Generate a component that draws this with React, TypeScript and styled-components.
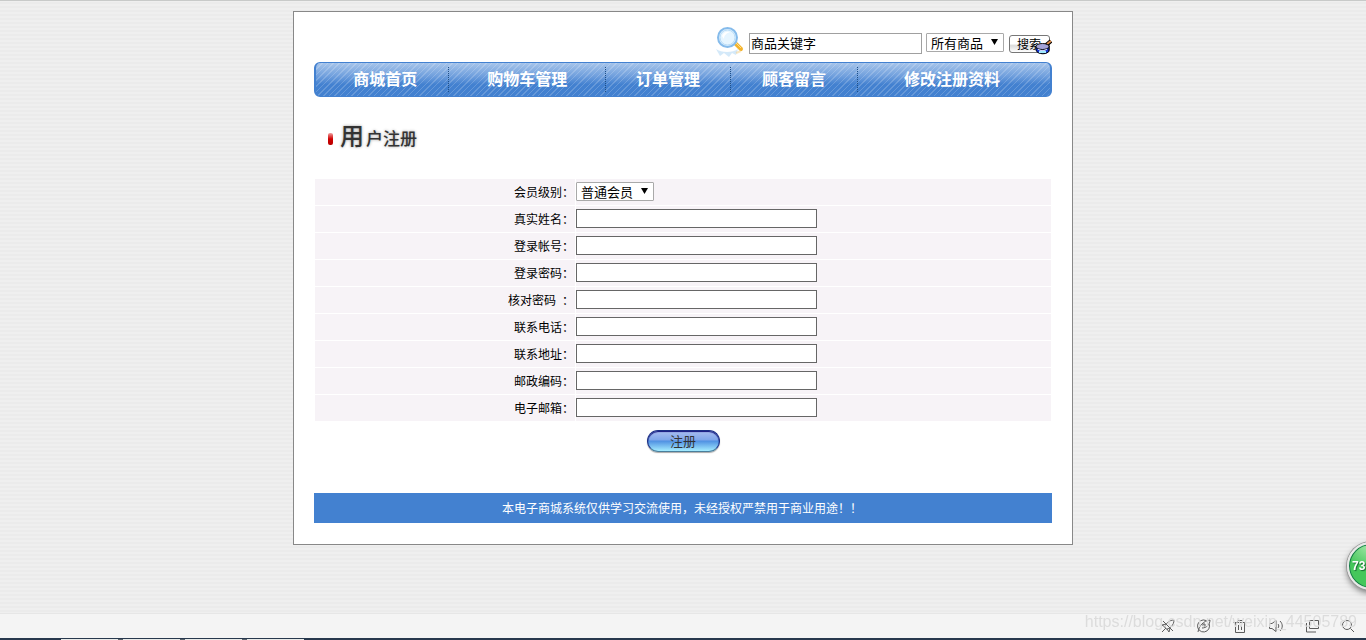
import React from "react";
import styled, { createGlobalStyle } from "styled-components";

const GlobalStyle = createGlobalStyle`
  * { box-sizing: border-box; }
  body {
    margin: 0;
    color: #000;
    font-family: "Noto Sans CJK SC", sans-serif;
    font-size: 12px;
    line-height: 18px;
    background: repeating-linear-gradient(#efefef 0 2px, #ebebeb 2px 4px);
    border-top: 1px solid #c8cac9;
  }
  input, select, button { font: inherit; margin: 0; }
`;

const Card = styled.div`
  max-width: 780px;
  margin: 10px auto 96px;
  padding: 14px 20px 21px;
  background: #fff;
  border: 1px solid #888;
`;

const SearchBar = styled.form`
  display: flex;
  justify-content: flex-end;
  align-items: flex-start;
  height: 36px;
`;

const SearchIcon = styled.svg`
  width: 30px;
  height: 34px;
  margin-right: 4px;
`;

const Keyword = styled.input`
  width: 173px;
  height: 21px;
  margin: 7px 4px 0 0;
  padding: 0 1px 2px;
  border: 1px solid #a0a0a0;
  font-size: 13px;
`;

const SelectBox = styled.span<{ $top?: number }>`
  position: relative;
  display: flex;
  width: 78px;
  margin-top: ${({ $top = 0 }) => $top}px;
  select {
    width: 100%;
    height: 19px;
    padding: 0 4px;
    appearance: none;
    background: #fff;
    border: 1px solid #a9a9a9;
    border-radius: 1px;
    color: #000;
    font-size: 13px;
    line-height: 17px;
  }
  svg {
    position: absolute;
    top: 6px;
    right: 6px;
    width: 7px;
    height: 6px;
    pointer-events: none;
  }
`;

const SearchButton = styled.button`
  position: relative;
  width: 41px;
  height: 18px;
  margin: 9px 2px 0 5px;
  padding: 0 7px;
  border: 1px solid #777;
  border-radius: 3px;
  background: linear-gradient(#fff 0 48%, #dcdcdc 60%, #fff);
  color: #000;
  line-height: 16px;
  text-align: left;
  white-space: nowrap;
  svg {
    position: absolute;
    top: 3px;
    right: -3px;
    width: 17px;
    height: 16px;
  }
`;

const Nav = styled.nav`
  display: grid;
  grid-template-columns: 134fr 157fr 126fr 127fr 193fr;
  height: 35px;
  padding: 4px 0;
  border: solid #4381d0;
  border-width: 1px 2px;
  border-radius: 6px;
  background:
    repeating-linear-gradient(135deg, rgba(255, 255, 255, 0.18) 0 1px, transparent 1px 4px),
    linear-gradient(#a6c4ea, #6f9fdd 40%, #4381d0 65%);
`;

const NavLink = styled.a`
  border-right: 1px dotted #1f4f86;
  color: #fff;
  font-size: 16px;
  font-weight: 700;
  line-height: 23px;
  text-align: center;
  text-decoration: none;
  &:first-child { padding-left: 6px; }
  &:last-child { border-right: 0; padding-right: 4px; }
`;

const Title = styled.h1`
  display: flex;
  align-items: baseline;
  gap: 2px;
  margin: 20px 0 23px;
  padding-left: 14px;
  color: #333;
  font-size: 17px;
  font-weight: 500;
  line-height: 35px;
  text-shadow: 0 0 3px #999;
`;

const Pill = styled.i`
  width: 5px;
  height: 12px;
  margin: 0 5px 1px 0;
  border-radius: 2px;
  background: linear-gradient(#f0a0a0, #d00000 50%, #b80000);
`;

const Initial = styled.span`
  font-size: 24px;
`;

const FieldTable = styled.table`
  width: 100%;
  border-collapse: separate;
  border-spacing: 1px;
  th, td {
    height: 26px;
    background: #f7f3f7;
  }
  th {
    width: 260px;
    padding: 0 1px 0 0;
    font-weight: 400;
    text-align: right;
    vertical-align: middle;
  }
  td {
    padding: 3px 0 0;
    vertical-align: top;
  }
`;

const Field = styled.input`
  display: block;
  width: 241px;
  height: 19px;
  padding: 0 2px;
  background: #fff;
  border: 1px solid #666;
`;

const SubmitButton = styled.button`
  display: block;
  width: 73px;
  height: 22px;
  margin: 8px auto 41px;
  padding: 0;
  border: 1px solid #1b2f86;
  border-bottom-color: #4a7f9c;
  border-radius: 11px;
  background: linear-gradient(#a9bdf0, #7ea6ea 45%, #4f90e2 50%, #a4ecff);
  box-shadow: 0 1px 1px #aaa, inset 0 1px 1px #10107a;
  color: #333;
  font-size: 13px;
  line-height: 20px;
`;

const Footer = styled.footer`
  padding: 6px 2px 6px 0;
  background: #4381d0;
  color: #fff;
  text-align: center;
`;

const StatusBar = styled.div`
  position: fixed;
  inset: auto 0 0;
  display: flex;
  justify-content: flex-end;
  align-items: center;
  gap: 22px;
  height: 27px;
  padding: 0 11px 1px 0;
  background: #f4f4f4;
  border-top: 1px solid #e6e6e6;
  border-bottom: 2px solid #27384d;
  svg {
    width: 14px;
    height: 14px;
    fill: none;
    stroke: #5c5c5c;
  }
`;

const TaskStrip = styled.div`
  position: fixed;
  inset: auto auto 0 61px;
  width: 243px;
  height: 1px;
  background: repeating-linear-gradient(90deg, #e8eae8 0 57px, #59626b 57px 62px);
`;

const Watermark = styled.span`
  position: fixed;
  right: 9px;
  bottom: 8px;
  color: #dcdcdc;
  font: 16px/20px "Liberation Sans", sans-serif;
`;

const Ball = styled.div`
  position: fixed;
  right: -29px;
  bottom: 50px;
  width: 48px;
  height: 48px;
  padding-left: 3px;
  border: 2px solid #e8e8e8;
  border-radius: 50%;
  background: radial-gradient(circle at 45% 0, #a8e8ac, #45c75b 50%);
  box-shadow: 0 0 0 1px #999, inset 0 0 0 1px #16784a, 0 3px 6px #777;
  color: #fff;
  font: bold 12px/44px "Liberation Sans", sans-serif;
  text-shadow: 1px 1px 1px #176b32;
`;

const navItems = ["商城首页", "购物车管理", "订单管理", "顾客留言", "修改注册资料"];

const fields = [
  { id: "name", label: "真实姓名：", type: "text" },
  { id: "account", label: "登录帐号：", type: "text" },
  { id: "password", label: "登录密码：", type: "password" },
  { id: "confirm", label: "核对密码\u2002：", type: "password" },
  { id: "phone", label: "联系电话：", type: "text" },
  { id: "address", label: "联系地址：", type: "text" },
  { id: "postcode", label: "邮政编码：", type: "text" },
  { id: "email", label: "电子邮箱：", type: "text" },
];

const Arrow = () => (
  <svg viewBox="0 0 7 6" aria-hidden="true"><path d="M0 0h7L3.5 6z" /></svg>
);

const Magnifier = () => (
  <SearchIcon viewBox="0 0 30 34" aria-hidden="true">
    <path d="M20 17l6 6" stroke="#f4b32c" strokeWidth="4" strokeLinecap="round" />
    <path d="M21 17l5 5" stroke="#ffe08a" strokeWidth="1" />
    <circle cx="12.5" cy="11.5" r="9.5" fill="#dceffd" stroke="#85bbeb" strokeWidth="2" />
    <circle cx="12.5" cy="11.5" r="7.5" fill="#e6f5ff" stroke="#b9dcf7" />
    <path d="M7 10c1-4 5-5 8-4-3 1-6 3-6 7z" fill="#fff" />
    <path d="M1 23c5 4 17 4 22 0l-2 6-4-2-3 4-5-4-4 3z" fill="#a9d4f3" opacity=".5" />
    <path d="M21 27l5-2" stroke="#f5ce83" opacity=".5" strokeWidth="2" />
  </SearchIcon>
);

const Lens = () => (
  <svg viewBox="0 0 17 16" aria-hidden="true">
    <path d="M10 7l6-5" stroke="#000" strokeWidth="4" />
    <path d="M12 5l4-3" stroke="#e08a45" strokeWidth="2" />
    <path d="M1 7v4c1 5 13 5 13 0V7z" fill="#1535d8" stroke="#000" />
    <path d="M4 13h7" stroke="#9fe9ff" strokeWidth="2" />
    <ellipse cx="7.5" cy="7.5" rx="6.5" ry="3" fill="#a3a3d8" stroke="#111" />
    <path d="M3 10c2 2 7 2 9 0" fill="none" stroke="#fff" />
  </svg>
);

export default function App() {
  return (
    <>
      <GlobalStyle />
      <Card>
        <SearchBar onSubmit={(e) => e.preventDefault()}>
          <Magnifier />
          <Keyword aria-label="商品关键字" defaultValue="商品关键字" />
          <SelectBox $top={7}>
            <select aria-label="商品类别"><option>所有商品</option></select>
            <Arrow />
          </SelectBox>
          <SearchButton type="submit">搜索<Lens /></SearchButton>
        </SearchBar>
        <Nav>
          {navItems.map((item) => <NavLink href="#" key={item}>{item}</NavLink>)}
        </Nav>
        <Title><Pill /><Initial>用</Initial>户注册</Title>
        <form onSubmit={(e) => e.preventDefault()}>
          <FieldTable>
            <tbody>
              <tr>
                <th scope="row"><label htmlFor="level">会员级别：</label></th>
                <td>
                  <SelectBox>
                    <select id="level"><option>普通会员</option></select>
                    <Arrow />
                  </SelectBox>
                </td>
              </tr>
              {fields.map((f) => (
                <tr key={f.id}>
                  <th scope="row"><label htmlFor={f.id}>{f.label}</label></th>
                  <td><Field id={f.id} type={f.type} /></td>
                </tr>
              ))}
            </tbody>
          </FieldTable>
          <SubmitButton type="submit">注册</SubmitButton>
        </form>
        <Footer>本电子商城系统仅供学习交流使用，未经授权严禁用于商业用途！！</Footer>
      </Card>
      <Ball>73</Ball>
      <StatusBar>
        <svg viewBox="0 0 14 14"><path d="M4 9c0-4 4-8 9-8 0 5-4 9-8 9zM5 5L1 6l3 2M9 9l-1 4-2-3M1 13l3-3M2 2l10 10" /></svg>
        <svg viewBox="0 0 14 14"><path d="M12 4.500a6 6 0 1 1-3-3M1 13C2 7 6 2 13 1c0 5-4 8-8 8M7 4v4M5 6h4" /></svg>
        <svg viewBox="0 0 14 14"><path d="M.5 3.500h13M4.500 3V1.500h5V3M2.500 4v9.500h9V4M5.500 6v5M8.500 6v5" /></svg>
        <svg viewBox="0 0 14 14"><path d="M.5 4.500H3l4-3v11l-4-3H.5zM9 5c1 1 1 3 0 4M11 2c3 3 3 7 0 10" /></svg>
        <svg viewBox="0 0 14 14"><path d="M4.500 1.500h9v8h-9zM1.500 4v9H11" /></svg>
        <svg viewBox="0 0 14 14"><circle cx="6" cy="6" r="4.500" /><path d="M9.500 9.500L13 13" /></svg>
      </StatusBar>
      <TaskStrip />
      <Watermark>https://blog.csdn.net/weixin_44505789</Watermark>
    </>
  );
}
